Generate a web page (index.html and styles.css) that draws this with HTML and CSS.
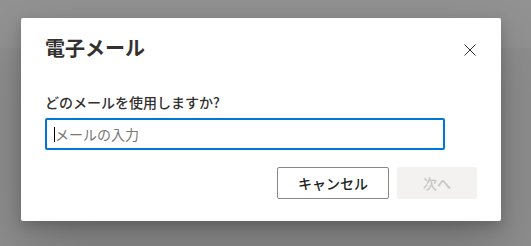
FILE: index.html
```html
<!DOCTYPE html>
<html lang="ja">
<head>
  <meta charset="UTF-8">
  <title>電子メール</title>
  <link rel="stylesheet" href="styles.css">
</head>
<body>
  <div class="page">
    <div class="topbar"></div>
  </div>

  <div class="overlay">
    <div class="dialog" role="dialog">
      <div class="dialog-head">
        <h1 class="dialog-title">電子メール</h1>
        <button class="close-btn" aria-label="閉じる">
          <svg width="12" height="12" viewBox="0 0 12 12">
            <path d="M0.5 0.5 L11.5 11.5 M11.5 0.5 L0.5 11.5" stroke="#323130" stroke-width="1" fill="none"/>
          </svg>
        </button>
      </div>

      <div class="dialog-body">
        <label class="field-label" for="mailInput">どのメールを使用しますか?</label>
        <div class="field">
          <input type="text" id="mailInput" placeholder="メールの入力">
        </div>
      </div>

      <div class="dialog-foot">
        <button class="btn btn-default">キャンセル</button>
        <button class="btn btn-primary" disabled>次へ</button>
      </div>
    </div>
  </div>
</body>
</html>
```

FILE: styles.css
```css
* {
  box-sizing: border-box;
}
body {
  margin: 0;
  height: 100vh;
  background: #8e8e8e;
  font-family: "Noto Sans CJK JP", "Noto Sans", sans-serif;
  overflow: hidden;
  position: relative;
}
.page {
  height: 100%;
}
.topbar {
  height: 48px;
  background: #929292;
}
.overlay {
  position: absolute;
  inset: 0;
  padding: 18px 0 0 21px;
}
.dialog {
  width: 480px;
  height: 203px;
  background: #fff;
  border-radius: 2px;
  box-shadow: 0 25px 57px rgba(0, 0, 0, 0.22), 0 5px 14px rgba(0, 0, 0, 0.18);
  display: flex;
  flex-direction: column;
}
.dialog-head {
  display: flex;
  justify-content: space-between;
  align-items: flex-start;
  padding: 16px 25px 0 24px;
}
.dialog-title {
  margin: 0;
  font-size: 20px;
  line-height: 28px;
  font-weight: 700;
  color: #323130;
}
.close-btn {
  margin-top: 10px;
  padding: 0;
  border: none;
  background: none;
  width: 12px;
  height: 12px;
  display: flex;
  cursor: pointer;
}
.dialog-body {
  padding: 30px 24px 0 24px;
}
.field-label {
  display: block;
  font-size: 14px;
  line-height: 20px;
  font-weight: 500;
  color: #323130;
  margin-bottom: 6px;
}
.field {
  position: relative;
  width: 400px;
}
.field::before {
  content: "";
  position: absolute;
  left: 9px;
  top: 9px;
  width: 1px;
  height: 15px;
  background: #000;
}
.field input {
  width: 100%;
  height: 32px;
  padding: 0 8px;
  border: 2px solid #0078d4;
  border-radius: 2px;
  font-family: inherit;
  font-size: 14px;
  color: #323130;
  outline: none;
}
.field input::placeholder {
  color: #797775;
}
.dialog-foot {
  display: flex;
  justify-content: flex-end;
  gap: 8px;
  padding: 17px 24px 0 24px;
}
.btn {
  height: 32px;
  min-width: 80px;
  border-radius: 2px;
  font-family: inherit;
  font-size: 14px;
  font-weight: 500;
  padding: 0 20px;
}
.btn-default {
  background: #fff;
  border: 1px solid #8a8886;
  color: #201f1e;
}
.btn-primary {
  background: #f3f2f1;
  border: 1px solid #f3f2f1;
  color: #c8c6c4;
}
```
